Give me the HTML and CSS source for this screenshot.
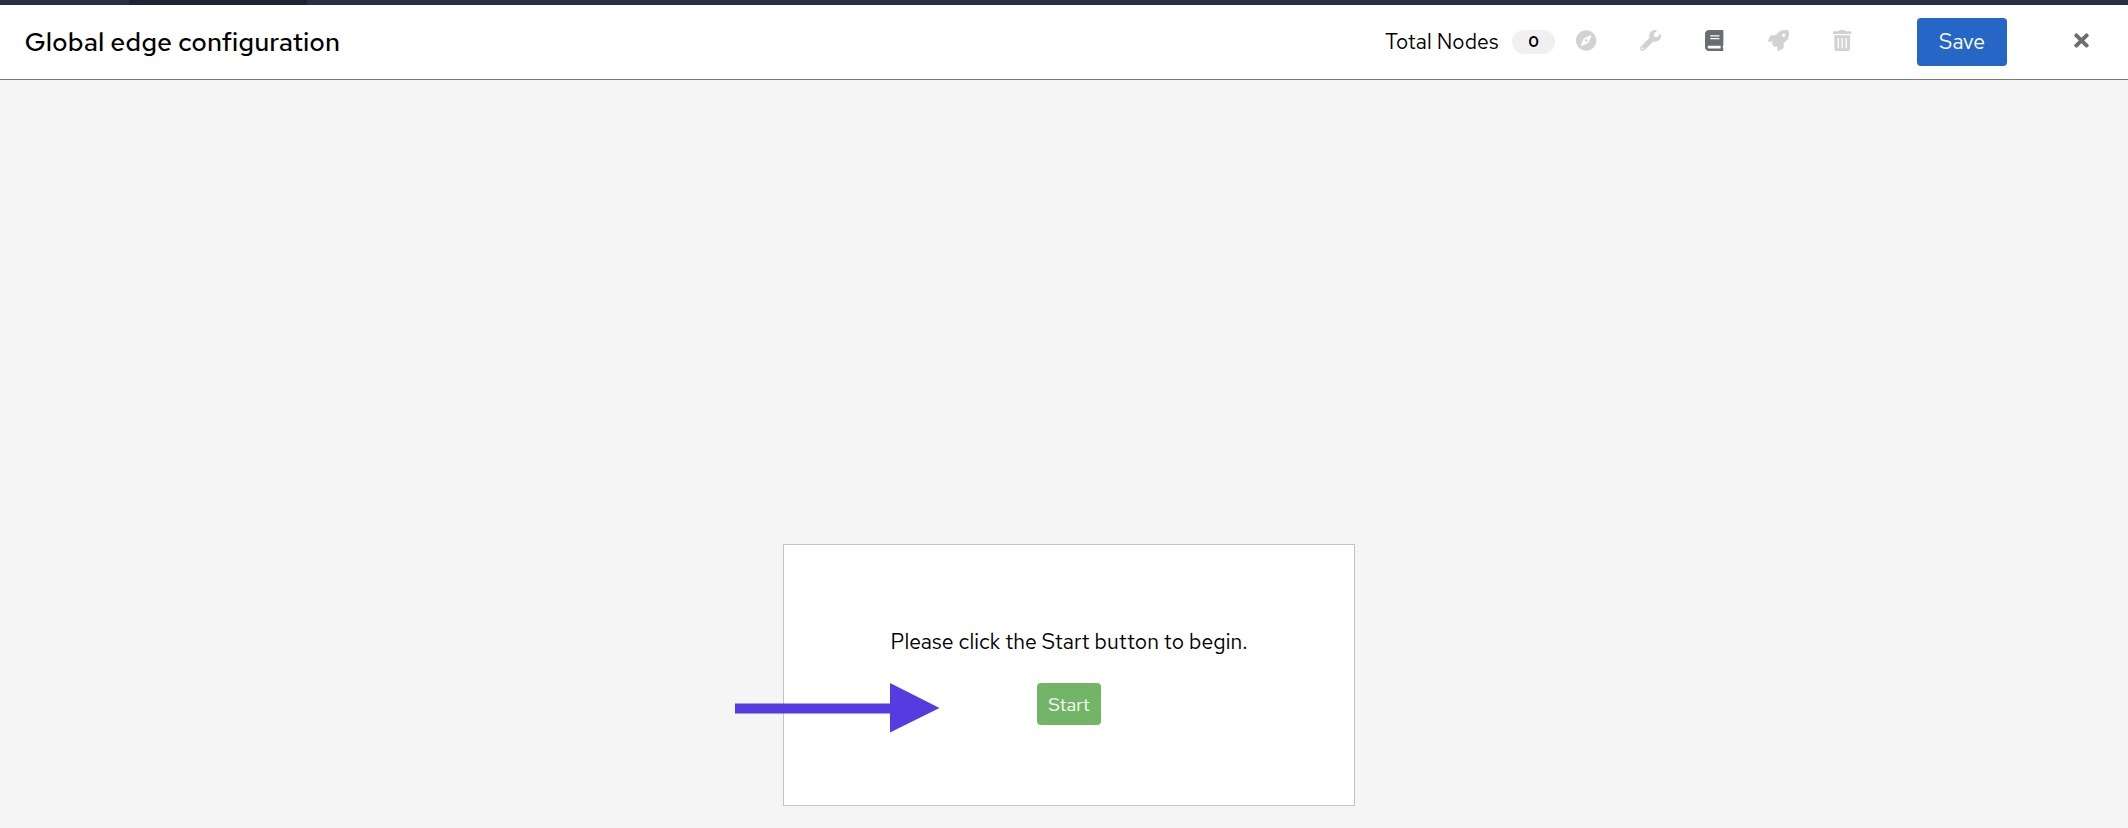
FILE: index.html
```html
<!DOCTYPE html>
<html lang="en">
<head>
<meta charset="utf-8">
<title>Global edge configuration</title>
<link rel="stylesheet" href="styles.css">
</head>
<body>
<div class="page">
  <div class="topbar"><div class="topbar-active"></div></div>
  <header class="header">
    <h1 class="title">Global edge configuration</h1>
    <span class="nodes-label">Total Nodes</span>
    <span class="badge">0</span>
    <nav class="tools">
      <svg class="icon" viewBox="0 0 496 512"><path d="M225.38 233.37c-12.5 12.5-12.5 32.76 0 45.25 12.49 12.5 32.76 12.5 45.25 0 12.5-12.5 12.5-32.76 0-45.25-12.5-12.49-32.76-12.49-45.25 0zM248 8C111.03 8 0 119.03 0 256s111.03 248 248 248 248-111.03 248-248S384.97 8 248 8zm126.14 148.05L308.17 300.4a31.938 31.938 0 0 1-15.77 15.77l-144.34 65.97c-16.65 7.61-33.81-9.55-26.2-26.2l65.98-144.35a31.938 31.938 0 0 1 15.77-15.77l144.34-65.97c16.65-7.6 33.8 9.55 26.19 26.2z"/></svg>
      <svg class="icon" viewBox="0 0 512 512"><path d="M507.73 109.1c-2.24-9.03-13.54-12.09-20.12-5.51l-74.36 74.36-67.88-11.31-11.31-67.88 74.36-74.36c6.62-6.62 3.43-17.9-5.66-20.16-47.38-11.74-99.55.91-136.58 37.93-39.64 39.64-50.55 97.1-34.05 147.2L18.74 402.76c-24.99 24.99-24.99 65.51 0 90.5 24.99 24.99 65.51 24.99 90.5 0l213.21-213.21c50.12 16.71 107.47 5.68 147.37-34.22 37.07-37.07 49.7-89.32 37.91-136.73zM64 472c-13.25 0-24-10.75-24-24 0-13.26 10.75-24 24-24s24 10.74 24 24c0 13.25-10.75 24-24 24z"/></svg>
      <svg class="icon icon-active" viewBox="0 0 448 512"><path d="M448 360V24c0-13.3-10.7-24-24-24H96C43 0 0 43 0 96v320c0 53 43 96 96 96h328c13.3 0 24-10.7 24-24v-16c0-7.5-3.5-14.3-8.9-18.7-4.2-15.4-4.2-59.3 0-74.7 5.4-4.3 8.9-11.1 8.9-18.6zM128 134c0-3.3 2.7-6 6-6h212c3.3 0 6 2.7 6 6v20c0 3.3-2.7 6-6 6H134c-3.3 0-6-2.7-6-6v-20zm0 64c0-3.3 2.7-6 6-6h212c3.3 0 6 2.7 6 6v20c0 3.3-2.7 6-6 6H134c-3.3 0-6-2.7-6-6v-20zm253.4 250H96c-17.7 0-32-14.3-32-32 0-17.6 14.4-32 32-32h285.4c-1.9 17.1-1.9 46.9 0 64z"/></svg>
      <svg class="icon" viewBox="0 0 512 512"><path d="M505.12 19.09c-1.19-5.53-6.66-11-12.21-12.19C460.72 0 435.51 0 410.41 0 307.18 0 245.27 55.2 199.05 128H94.84c-16.35.02-35.56 11.88-42.89 26.48L2.52 253.3A28.4 28.4 0 0 0 0 264a24 24 0 0 0 24 24h103.82l-22.48 22.47c-11.37 11.36-13 32.26 0 45.25l50.9 50.9c11.16 11.19 32.16 13.16 45.28 0L224 384.16V488a24 24 0 0 0 24 24 28.56 28.56 0 0 0 10.71-2.52l98.73-49.39c14.63-7.3 26.51-26.5 26.51-42.86V312.8c72.6-46.31 128.03-108.41 128.03-211.1.1-25.2.1-50.4-6.86-82.61zM384.04 168A40 40 0 1 1 424.05 128a40.02 40.02 0 0 1-40.01 40z"/></svg>
      <svg class="icon" viewBox="0 0 448 512"><path d="M32 464a48 48 0 0 0 48 48h288a48 48 0 0 0 48-48V128H32zm272-256a16 16 0 0 1 32 0v224a16 16 0 0 1-32 0zm-96 0a16 16 0 0 1 32 0v224a16 16 0 0 1-32 0zm-96 0a16 16 0 0 1 32 0v224a16 16 0 0 1-32 0zM432 32H312l-9.4-18.7A24 24 0 0 0 281.1 0H166.8a23.72 23.72 0 0 0-21.4 13.3L136 32H16A16 16 0 0 0 0 48v32a16 16 0 0 0 16 16h416a16 16 0 0 0 16-16V48a16 16 0 0 0-16-16z"/></svg>
    </nav>
    <button class="btn btn-save">Save</button>
    <svg class="icon icon-active icon-close" viewBox="0 0 352 512"><path d="M242.72 256l100.07-100.07c12.28-12.28 12.28-32.19 0-44.48l-22.24-22.24c-12.28-12.28-32.19-12.28-44.48 0L176 189.28 75.93 89.21c-12.28-12.28-32.19-12.28-44.48 0L9.21 111.45c-12.28 12.28-12.28 32.19 0 44.48L109.28 256 9.21 356.07c-12.28 12.28-12.28 32.19 0 44.48l22.24 22.24c12.28 12.28 32.2 12.28 44.48 0L176 322.72l100.07 100.07c12.28 12.28 32.2 12.28 44.48 0l22.24-22.24c12.28-12.28 12.28-32.19 0-44.48L242.72 256z"/></svg>
  </header>
  <main class="canvas">
    <section class="card">
      <p class="message">Please click the Start button to begin.</p>
      <button class="btn btn-start">Start</button>
      <svg class="arrow" viewBox="0 0 205 50"><path d="M0 20.6h155V0l49.5 25L155 49.5V30.6H0z"/></svg>
    </section>
  </main>
</div>
</body>
</html>
```

FILE: styles.css
```css
* { box-sizing: border-box; }
body {
  margin: 0;
  font-family: "Red Hat Text", Inter, "Liberation Sans", sans-serif;
  color: #000;
  background: #f5f5f5;
}
.page {
  display: flex;
  flex-direction: column;
  height: 828px;
  overflow: hidden;
}
.topbar {
  flex: none;
  height: 5px;
  padding-left: 129px;
  background: #292e42;
}
.topbar-active {
  width: 178px;
  height: 5px;
  background: #1f2335;
}
.header {
  flex: none;
  display: flex;
  align-items: center;
  height: 75px;
  padding: 0 39px 1px 24.5px;
  background: #fff;
  border-bottom: 1px solid #77797b;
}
.title {
  margin: 0 auto 0 0;
  font-size: 26.5px;
  font-weight: 500;
  line-height: 32px;
  white-space: nowrap;
}
.nodes-label {
  width: 113px;
  margin-right: 14px;
  font-size: 21.1px;
  letter-spacing: 0.08px;
  white-space: nowrap;
}
.badge {
  width: 43px;
  height: 24px;
  border-radius: 12px;
  background: #f0f0f0;
  font-size: 15.8px;
  font-weight: 600;
  line-height: 24px;
  text-align: center;
}
.tools {
  display: grid;
  grid-template-columns: repeat(5, 64px);
  justify-items: center;
  width: 320px;
  margin: 0 42.5px 0 -0.5px;
}
.icon {
  display: block;
  height: 21px;
  margin-bottom: 2px;
  fill: #d2d2d2;
}
.icon-active { fill: #6a6e73; }
.btn {
  padding: 0;
  border: 0;
  border-radius: 4px;
  color: #fff;
  font-family: inherit;
}
.btn-save {
  width: 90px;
  height: 48px;
  background: #2666c6;
  font-size: 21.1px;
}
.icon-close {
  width: 15px;
  margin-left: 67px;
}
.canvas {
  flex: 1;
  padding: 464px 0 0 783px;
}
.card {
  position: relative;
  display: flex;
  flex-direction: column;
  align-items: center;
  width: 572px;
  height: 262px;
  padding-top: 80px;
  background: #fff;
  border: 1px solid #c4c4c4;
}
.message {
  margin: 0 0 26px;
  font-size: 21.2px;
  line-height: 32px;
  letter-spacing: 0.05px;
  white-space: nowrap;
}
.btn-start {
  width: 64px;
  height: 42px;
  background: #73b567;
  font-size: 18.5px;
}
/* Pointer overlapping the card's left edge */
.arrow {
  position: absolute;
  left: -49px;
  top: 138px;
  width: 205px;
  height: 50px;
  fill: #563ce0;
}
```
